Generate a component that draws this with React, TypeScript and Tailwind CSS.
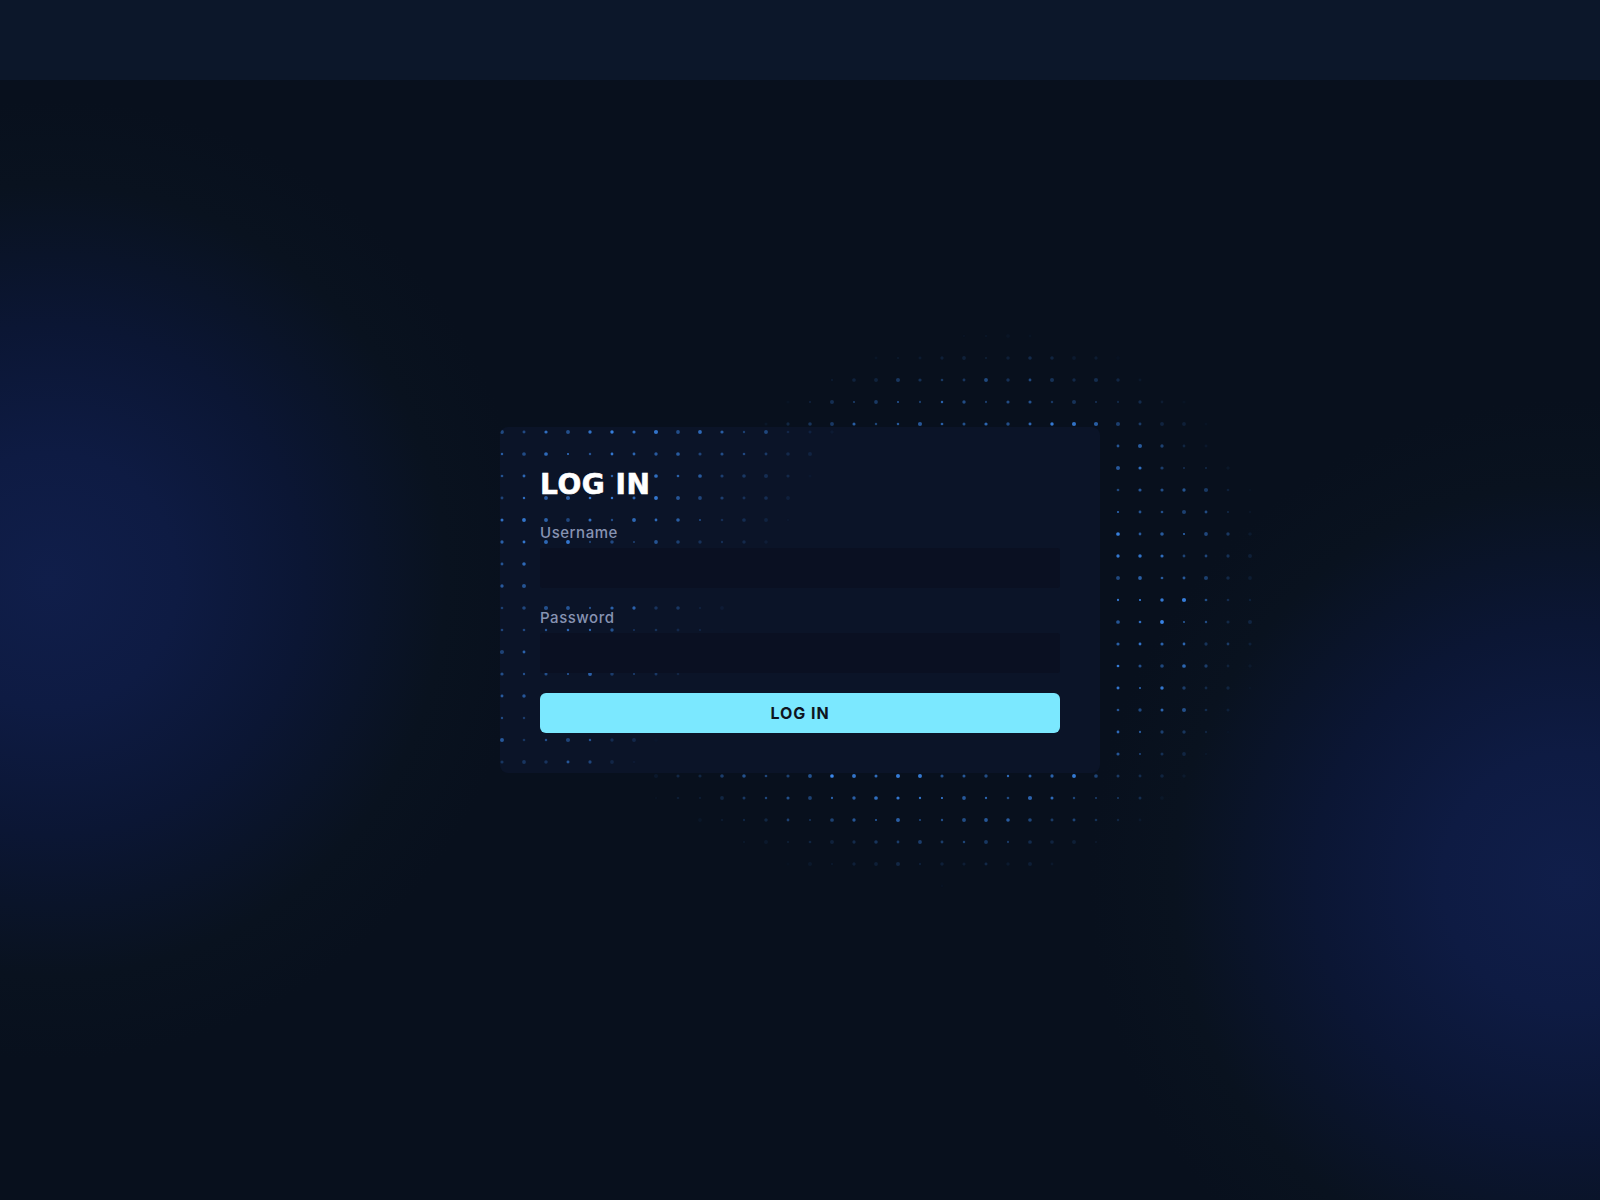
import React from "react";

// deterministic noise so the dots look random but stay put
function rnd(i: number, j: number, s: number) {
  const x = Math.sin(i * 127.1 + j * 311.7 + s * 74.7) * 43758.5453;
  return x - Math.floor(x);
}

const clamp = (n: number) => Math.max(0, Math.min(1, n));

type Dot = { cx: number; cy: number; r: number; o: number };

// dot cluster behind the card (page coords)
function fieldA(): Dot[] {
  const dots: Dot[] = [];
  for (let i = 0; i < 30; i++) {
    for (let j = 0; j < 26; j++) {
      const x = 656 + 22 * i;
      const y = 337 + 22 * j;
      const cx = 990 - (y - 425) * 0.08;
      const rx = x > cx ? 300 : 330 + (y - 425) * 0.25;
      const dx = (x - cx) / rx;
      const dy = (y - 610) / 282;
      const d = Math.sqrt(dx * dx + dy * dy);
      const m = Math.pow(clamp((1 - d) / 0.32), 1.2);
      if (m <= 0.03) continue;
      const o = m * (0.45 + 0.55 * rnd(i, j, 1));
      dots.push({ cx: x - 640, cy: y - 318, r: 1 + rnd(i, j, 2) * 1.1, o });
    }
  }
  return dots;
}

// dots fading out of the card's top-left corner (card coords)
function fieldB(): Dot[] {
  const dots: Dot[] = [];
  for (let i = 0; i < 18; i++) {
    for (let j = 0; j < 16; j++) {
      const u = 2 + 22 * i;
      const v = 5 + 22 * j;
      const w = 350 - 0.6 * v;
      const m = clamp((1 - u / w) * 2) * (1 - v / 800);
      if (m <= 0.02) continue;
      const o = m * (0.45 + 0.55 * rnd(i, j, 3));
      dots.push({ cx: u, cy: v, r: 1 + rnd(i, j, 4) * 1.1, o });
    }
  }
  return dots;
}

const dotsA = fieldA();
const dotsB = fieldB();

function Field({ label, type }: { label: string; type: string }) {
  return (
    <label className="flex flex-col gap-[5px]">
      <span className="text-[15px] leading-5 font-medium tracking-[0.035em] text-[#8793b2]">{label}</span>
      <input
        type={type}
        className="h-10 rounded-[3px] bg-[#0a1022] px-3 text-[15px] text-white outline-none"
      />
    </label>
  );
}

export default function App() {
  return (
    <div className="relative flex min-h-screen flex-col overflow-hidden bg-[#08101d] font-['Inter','Noto_Sans',sans-serif]">
      {/* glows */}
      <div className="pointer-events-none absolute left-[-450px] top-[80px] h-[1000px] w-[1000px] rounded-full bg-[radial-gradient(circle,#101e4a_0%,#0e1b43_18%,#0b1634_36%,#09121f_56%,transparent_68%)]" />
      <div className="pointer-events-none absolute left-[1070px] top-[380px] h-[1000px] w-[1000px] rounded-full bg-[radial-gradient(circle,#101e4a_0%,#0e1b43_18%,#0b1634_36%,#09121f_56%,transparent_68%)]" />

      <header className="relative h-20 bg-[#0c172a]" />

      <main className="relative flex flex-1 items-center justify-center pb-20">
        <div className="relative">
          <svg
            className="pointer-events-none absolute left-[140px] top-[-110px]"
            width={660}
            height={580}
          >
            {dotsA.map((d, k) => (
              <circle key={k} cx={d.cx} cy={d.cy} r={d.r} fill="#3b88ec" opacity={d.o} />
            ))}
          </svg>

          <div className="relative w-[600px] overflow-hidden rounded-lg bg-[#0b1428] p-10">
            <svg className="pointer-events-none absolute left-0 top-0" width={600} height={346}>
              {dotsB.map((d, k) => (
                <circle key={k} cx={d.cx} cy={d.cy} r={d.r} fill="#3b88ec" opacity={d.o} />
              ))}
            </svg>

            <form className="relative flex flex-col" onSubmit={(e) => e.preventDefault()}>
              <h1 className="mb-5 font-['DejaVu_Sans',sans-serif] text-[28px] leading-9 font-bold tracking-[0.02em] text-white [-webkit-text-stroke:0.6px_white]">
                LOG IN
              </h1>
              <Field label="Username" type="text" />
              <div className="mt-5">
                <Field label="Password" type="password" />
              </div>
              <button
                type="submit"
                className="mt-5 h-10 rounded-md bg-[#7be8ff] text-[16px] font-bold tracking-[0.06em] text-[#0e1420]"
              >
                LOG IN
              </button>
            </form>
          </div>
        </div>
      </main>
    </div>
  );
}
